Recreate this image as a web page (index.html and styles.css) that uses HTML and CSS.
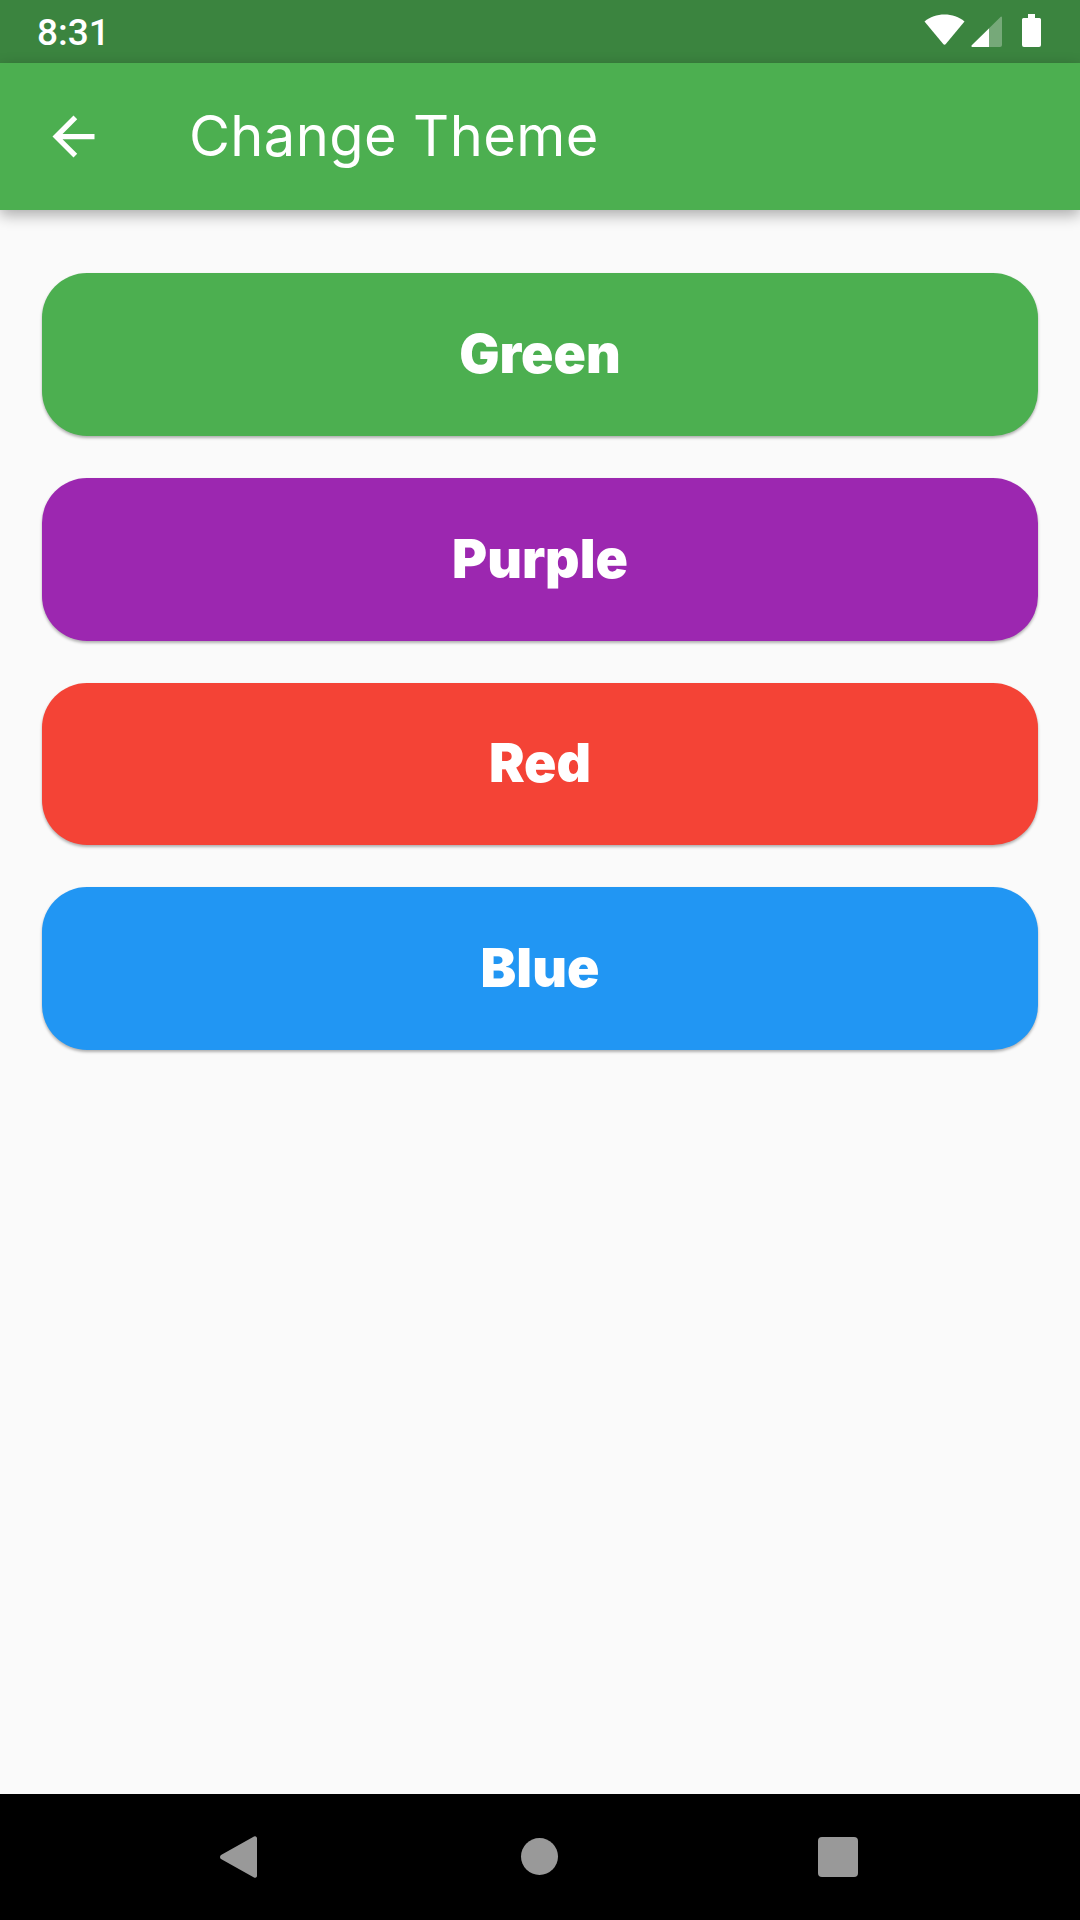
FILE: index.html
```html
<!DOCTYPE html>
<html lang="en">
<head>
  <meta charset="UTF-8" />
  <meta name="viewport" content="width=device-width, initial-scale=1" />
  <title>Change Theme</title>
  <link rel="stylesheet" href="styles.css">
</head>
<body>

  <div class="status-bar">
    <span class="clock">8:31</span>
    <div class="status-icons">
      <svg class="icon-wifi" width="41" height="31" viewBox="0 0 41 31">
        <path d="M0.5 7.5C6 2.8 13 0.5 20.5 0.5S35 2.8 40.5 7.5L22 29.8a2 2 0 0 1-3 0z" fill="#fff"/>
      </svg>
      <svg class="icon-signal" width="31" height="31" viewBox="0 0 31 31">
        <path d="M30 0.5a1 1 0 0 1 1 1V29a2 2 0 0 1-2 2H1.500a1 1 0 0 1-.7-1.700z" fill="#fff" fill-opacity="0.3"/>
        <path d="M18 12.500V31H1.500a1 1 0 0 1-.7-1.700z" fill="#fff"/>
      </svg>
      <svg class="icon-battery" width="19" height="33" viewBox="0 0 19 33">
        <path d="M6 0h7v4h4.500a1.500 1.500 0 0 1 1.500 1.500V31a2 2 0 0 1-2 2H2a2 2 0 0 1-2-2V5.500A1.500 1.500 0 0 1 1.500 4H6z" fill="#fff"/>
      </svg>
    </div>
  </div>

  <header class="app-bar">
    <svg class="back-icon" width="63" height="63" viewBox="0 0 24 24">
      <path d="M20 11H7.830l5.590-5.590L12 4l-8 8 8 8 1.410-1.410L7.830 13H20v-2z" fill="#fff"/>
    </svg>
    <h1 class="app-title">Change Theme</h1>
  </header>

  <main class="theme-list">
    <button class="theme-button green">Green</button>
    <button class="theme-button purple">Purple</button>
    <button class="theme-button red">Red</button>
    <button class="theme-button blue">Blue</button>
  </main>

  <nav class="nav-bar">
    <svg class="nav-back" width="37" height="42" viewBox="0 0 37 42">
      <path d="M34 0.500a2 2 0 0 1 3 1.500V40a2 2 0 0 1-3 1.500L1 23a2.500 2.500 0 0 1 0-4z" fill="#999"/>
    </svg>
    <div class="nav-home"></div>
    <div class="nav-recent"></div>
  </nav>

</body>
</html>
```

FILE: styles.css
```css
* {
  margin: 0;
  padding: 0;
  box-sizing: border-box;
}
html, body {
  height: 100%;
  background: #fafafa;
  overflow: hidden;
}
body {
  display: flex;
  flex-direction: column;
  font-family: 'Inter', sans-serif;
}

.status-bar {
  height: 63px;
  background: #3b843f;
  display: flex;
  align-items: center;
  justify-content: space-between;
  padding: 0 39px 0 37px;
}
.clock {
  font-family: 'Roboto', sans-serif;
  font-size: 37px;
  font-weight: 500;
  color: #fff;
  margin-top: 2px;
}
.status-icons {
  display: flex;
  align-items: flex-start;
  height: 33px;
  margin-top: -2px;
}
.icon-wifi {
  margin-right: 6px;
}
.icon-signal {
  margin: 2px 20px 0 0;
}

.app-bar {
  height: 147px;
  background: #4caf50;
  display: flex;
  align-items: center;
  padding-left: 42px;
  box-shadow: 0 5px 14px rgba(0,0,0,0.32);
  position: relative;
  z-index: 1;
}
.back-icon {
  flex-shrink: 0;
}
.app-title {
  margin: -2px 0 0 84px;
  font-size: 56px;
  font-weight: 400;
  letter-spacing: 0.4px;
  color: #fff;
}

.theme-list {
  flex: 1;
  display: flex;
  flex-direction: column;
  gap: 42px;
  padding: 63px 42px 0;
}
.theme-button {
  height: 162.75px;
  border: none;
  border-radius: 45px;
  padding-bottom: 2px;
  font-family: 'Inter', sans-serif;
  font-size: 53.5px;
  font-weight: 900;
  color: #fff;
  box-shadow: 0 2px 3px rgba(0,0,0,0.3);
}
.green { background: #4caf50; }
.purple { background: #9c27b0; }
.red { background: #f44336; }
.blue { background: #2196f3; }

.nav-bar {
  height: 126px;
  background: #000;
  position: relative;
}
.nav-back {
  position: absolute;
  left: 220px;
  top: 42px;
}
.nav-home {
  position: absolute;
  left: 521px;
  top: 44px;
  width: 37px;
  height: 37px;
  border-radius: 50%;
  background: #999;
}
.nav-recent {
  position: absolute;
  left: 818px;
  top: 43px;
  width: 40px;
  height: 40px;
  border-radius: 4px;
  background: #999;
}
```
